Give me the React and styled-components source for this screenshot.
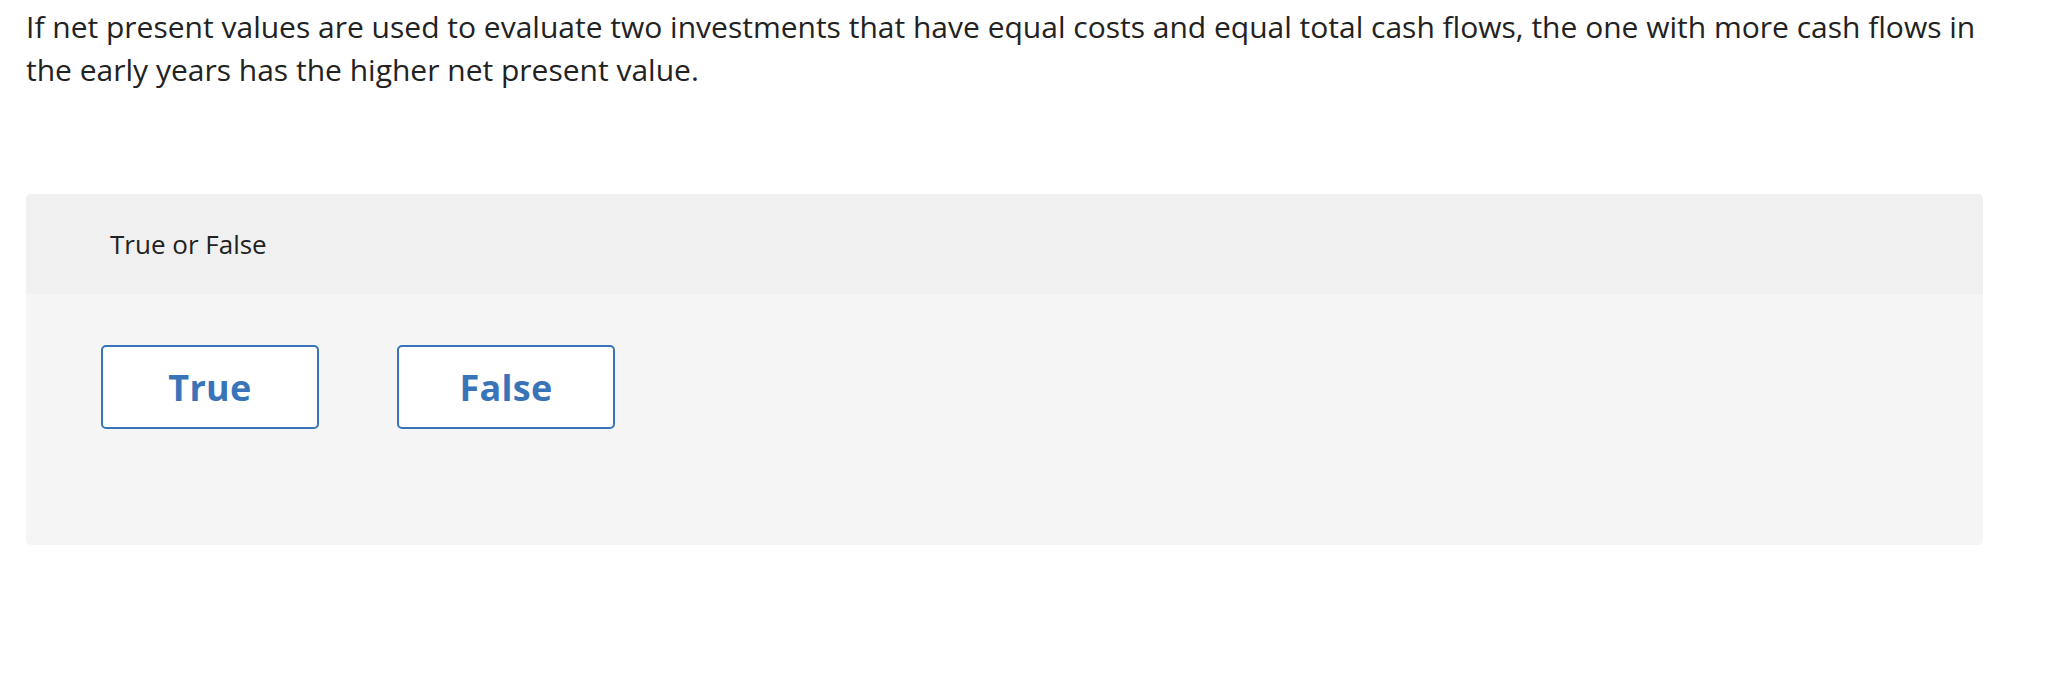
import styled, { createGlobalStyle } from "styled-components";

const Global = createGlobalStyle`
  body {
    margin: 0;
    background: #fff;
    font-family: "Open Sans", Lato, Arial, sans-serif;
    color: #222;
  }
`;

// Page wrapper
const Page = styled.div`
  width: 1957px;
  padding: 5px 0 0 26px;
`;

// Question text
const Question = styled.p`
  margin: 0;
  font-size: 30px;
  line-height: 43px;
  color: #222;
`;

// Card with answer options
const Card = styled.div`
  margin-top: 103px;
  border-radius: 5px;
  overflow: hidden;
  background: #f5f5f5;
`;

const Header = styled.div`
  height: 100px;
  display: flex;
  align-items: center;
  padding-left: 84px;
  background: #f0f0f0;
  font-size: 26px;
  color: #222;
`;

const Body = styled.div`
  height: 251px;
  padding: 51px 0 0 75px;
  box-sizing: border-box;
  display: flex;
  gap: 78px;
  align-items: flex-start;
`;

const Choice = styled.button`
  width: 218px;
  height: 84px;
  box-sizing: border-box;
  background: #fff;
  border: 2px solid #3a74b8;
  border-radius: 5px;
  font-family: "Open Sans", Lato, Arial, sans-serif;
  font-weight: 700;
  font-size: 36px;
  letter-spacing: 0.3px;
  color: #3a74b8;
  cursor: pointer;
`;

export default function App() {
  const options = ["True", "False"];
  return (
    <>
      <Global />
      <Page>
        <Question>
          If net present values are used to evaluate two investments that have equal costs and equal total cash flows, the one with more cash flows in the early years has the higher net present value.
        </Question>
        <Card>
          <Header>True or False</Header>
          <Body>
            {options.map((o) => (
              <Choice key={o}>{o}</Choice>
            ))}
          </Body>
        </Card>
      </Page>
    </>
  );
}
